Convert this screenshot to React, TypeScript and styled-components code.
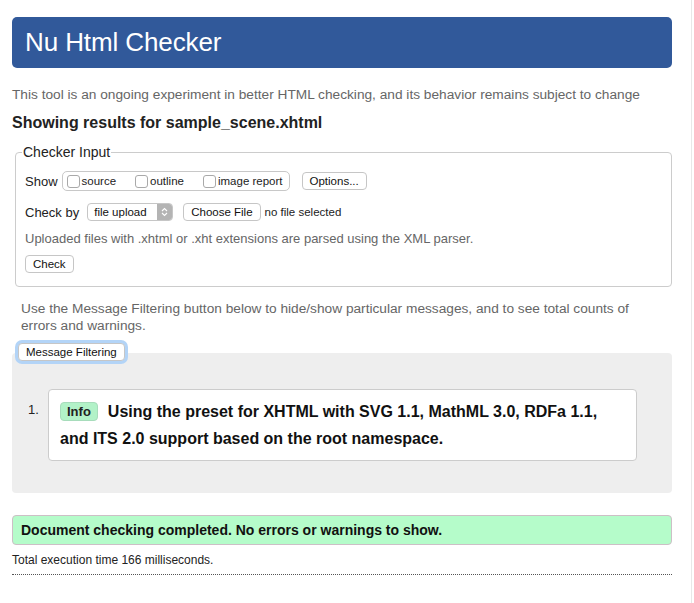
import React from 'react';
import styled, {createGlobalStyle} from 'styled-components';

const GlobalStyle = createGlobalStyle`
    html, body {
        margin: 0;
        padding: 0;
        background: #ffffff;
    }
    body {
        font-family: "Liberation Sans", Arial, sans-serif;
        color: #222;
    }
`;

const Page = styled.div`
    width: 692px;
    min-height: 603px;
    box-sizing: border-box;
    border-right: 1px solid #e8e8e8;
    padding: 17px 19px 0 12px;
`;

const Banner = styled.h1`
    margin: 0;
    height: 51px;
    display: flex;
    align-items: center;
    padding: 0 13px;
    background-color: #31599a;
    border-radius: 5px;
    color: #fff;
    font-size: 26px;
    font-weight: normal;
    letter-spacing: -0.1px;
`;

const Intro = styled.p`
    margin: 18px 0 0 0;
    font-size: 13.7px;
    color: #666;
    line-height: 18px;
`;

const ResultsTitle = styled.h2`
    margin: 9px 0 0 0;
    font-size: 16px;
    font-weight: bold;
    color: #222;
    line-height: 19px;
`;

const Fieldset = styled.fieldset`
    margin: 12px 0 0 3px;
    padding: 4px 9px 13px 9px;
    border: 1px solid #cccccc;
    border-radius: 4px;
`;

const Legend = styled.legend`
    padding: 0 1px;
    margin-left: -3px;
    font-size: 14px;
    color: #222;
`;

const Row = styled.div<{spacing?: number}>`
    display: flex;
    align-items: center;
    gap: 8px;
    margin-top: ${(p) => p.spacing ?? 7}px;
    font-size: 13px;
`;

const Label = styled.span<{small?: boolean}>`
    font-size: ${(p) => (p.small ? 11.5 : 13)}px;
    color: #222;
`;

const CheckGroup = styled.div`
    display: flex;
    align-items: center;
    gap: 19px;
    height: 18px;
    padding: 0 6px 0 4px;
    margin-left: -4px;
    border: 1px solid #c8c8c8;
    border-radius: 5px;
`;

const CheckItem = styled.label`
    display: flex;
    align-items: center;
    gap: 2px;
    font-size: 11.5px;
    color: #222;
`;

const Box = styled.span`
    display: inline-block;
    width: 11px;
    height: 11px;
    border: 1px solid #a9a9a9;
    border-radius: 3px;
    background: #fff;
`;

const Button = styled.button<{focused?: boolean}>`
    font-family: "Liberation Sans", Arial, sans-serif;
    font-size: 11.5px;
    color: #111;
    background: #fff;
    border: 1px solid #c6c6c6;
    border-radius: 4px;
    height: 18px;
    padding: 0 7px;
    line-height: 16px;
    box-shadow: ${(p) => (p.focused ? '0 0 0 3px #b3d4f7' : 'none')};
`;

const Select = styled.div`
    display: flex;
    align-items: stretch;
    width: 86px;
    height: 18px;
    border: 1px solid #c6c6c6;
    border-radius: 4px;
    overflow: hidden;
    font-size: 11.5px;
    box-sizing: border-box;
`;

const SelectText = styled.span`
    flex: 1;
    display: flex;
    align-items: center;
    padding-left: 6px;
    color: #111;
`;

const Stepper = styled.span`
    width: 15px;
    background: #b4b4b4;
    display: flex;
    align-items: center;
    justify-content: center;
`;

const Hint = styled.p`
    margin: 10px 0 0 0;
    font-size: 13px;
    color: #666;
    line-height: 16px;
`;

const Filtering = styled.p`
    margin: 13px 30px 0 9px;
    font-size: 13.7px;
    color: #666;
    line-height: 17px;
`;

const FilterWrap = styled.div`
    position: relative;
    z-index: 1;
    margin: 8px 0 0 6px;
    height: 18px;
`;

const Results = styled.div`
    margin-top: -7px;
    background: #eeeeee;
    border-radius: 4px;
    padding: 36px 35px 32px 16px;
`;

const MessageList = styled.ol`
    margin: 0;
    padding: 0;
    list-style: none;
`;

const MessageItem = styled.li`
    display: flex;
    align-items: flex-start;
`;

const Num = styled.span`
    width: 20px;
    padding-top: 13px;
    font-size: 13px;
    color: #222;
`;

const MessageCard = styled.div`
    flex: 1;
    background: #fff;
    border: 1px solid #cccccc;
    border-radius: 4px;
    padding: 8px 12px 8px 11px;
    font-size: 16px;
    font-weight: bold;
    line-height: 27px;
    color: #111;
`;

const Badge = styled.span`
    display: inline-block;
    background: #b2f2c8;
    border: 1px solid #a7dcbb;
    border-radius: 4px;
    padding: 0 6px;
    margin-right: 10px;
    font-size: 13px;
    line-height: 17px;
    color: #222;
    vertical-align: 1px;
`;

const Success = styled.div`
    margin-top: 22px;
    background: #b5fcca;
    border: 1px solid #cdbfc6;
    border-radius: 4px;
    padding: 0 8px;
    height: 28px;
    display: flex;
    align-items: center;
    font-size: 14px;
    font-weight: bold;
    color: #111;
`;

const Timing = styled.p`
    margin: 8px 0 0 0;
    padding-bottom: 7px;
    border-bottom: 1px dotted #555;
    font-size: 12px;
    color: #222;
    line-height: 14px;
`;

const StepperIcon = () => (
    <svg width="7" height="10" viewBox="0 0 7 10">
        <path d="M1 4 L3.5 1.5 L6 4" fill="none" stroke="#fff" strokeWidth="1.1"/>
        <path d="M1 6 L3.5 8.5 L6 6" fill="none" stroke="#fff" strokeWidth="1.1"/>
    </svg>
);

export default function App() {
    return (
        <Page>
            <GlobalStyle/>
            <Banner>Nu Html Checker</Banner>
            <Intro>This tool is an ongoing experiment in better HTML checking, and its behavior remains subject to change</Intro>
            <ResultsTitle>Showing results for sample_scene.xhtml</ResultsTitle>
            <Fieldset>
                <Legend>Checker Input</Legend>
                <Row>
                    <Label>Show</Label>
                    <CheckGroup>
                        <CheckItem><Box/>source</CheckItem>
                        <CheckItem><Box/>outline</CheckItem>
                        <CheckItem><Box/>image report</CheckItem>
                    </CheckGroup>
                    <Button style={{marginLeft: 4}}>Options...</Button>
                </Row>
                <Row spacing={12}>
                    <Label>Check by</Label>
                    <Select>
                        <SelectText>file upload</SelectText>
                        <Stepper><StepperIcon/></Stepper>
                    </Select>
                    <Button style={{marginLeft: 2}}>Choose File</Button>
                    <Label small style={{marginLeft: -4}}>no file selected</Label>
                </Row>
                <Hint>Uploaded files with .xhtml or .xht extensions are parsed using the XML parser.</Hint>
                <Row spacing={8}>
                    <Button>Check</Button>
                </Row>
            </Fieldset>
            <Filtering>Use the Message Filtering button below to hide/show particular messages, and to see total counts of errors and warnings.</Filtering>
            <FilterWrap>
                <Button focused>Message Filtering</Button>
            </FilterWrap>
            <Results>
                <MessageList>
                    <MessageItem>
                        <Num>1.</Num>
                        <MessageCard>
                            <Badge>Info</Badge>
                            Using the preset for XHTML with SVG 1.1, MathML 3.0, RDFa 1.1, and ITS 2.0 support based on the root namespace.
                        </MessageCard>
                    </MessageItem>
                </MessageList>
            </Results>
            <Success>Document checking completed. No errors or warnings to show.</Success>
            <Timing>Total execution time 166 milliseconds.</Timing>
        </Page>
    );
}
